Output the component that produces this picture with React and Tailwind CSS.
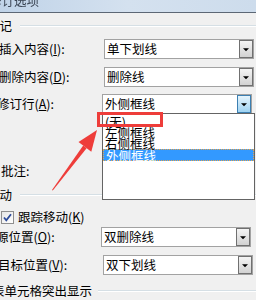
import React from "react";

function Arrow() {
  return (
    <svg className="w-[14px] h-[18px]" viewBox="0 0 14 18">
      <path d="M3.5 8 L10.5 8 L7 11.5 Z" fill="#000" />
    </svg>
  );
}

function Select({ text, focused = false, children }) {
  return (
    <div className="relative w-[150px] h-full border border-[#a2a2a2] bg-white flex items-center">
      <span className="pl-[2px] leading-none flex-1">{text}</span>
      <div
        className={
          focused
            ? "h-full w-[14px] border border-[#3c7fb1] bg-gradient-to-b from-[#e5f4fc] to-[#9fd3f2] flex items-center justify-center"
            : "h-full w-[14px] border border-[#707070] bg-gradient-to-b from-[#f4f4f4] to-[#d2d2d2] flex items-center justify-center"
        }
      >
        <Arrow />
      </div>
      {children}
    </div>
  );
}

function Header({ text, offset, lineGap, className }) {
  return (
    <div className={"flex items-center " + className}>
      <span className={"shrink-0 whitespace-nowrap " + offset}>{text}</span>
      <div className={"flex-1 h-[2px] border-t border-[#d5dfe5] border-b border-b-white " + lineGap} />
    </div>
  );
}

export default function App() {
  return (
    <div className="relative w-[256px] h-[300px] overflow-hidden bg-[#f0f0f0] font-['Noto_Sans_CJK_SC','Noto_Sans',sans-serif] text-[12.5px] text-black">
      {/* title bar */}
      <div className="h-[13px] border-b border-[#5c6775] bg-gradient-to-r from-[#c0d3e8] via-[#d4e1ef] to-[#cddcec] overflow-hidden">
        <div className="-mt-[7px] -ml-[11px] text-[12.5px] leading-[15px] text-[#3b4554] blur-[0.4px] whitespace-nowrap">修订选项</div>
      </div>

      <Header text="标记" offset="-ml-[13px]" lineGap="ml-[8px]" className="h-[26px]" />

      <div className="h-[20px] flex items-center">
        <div className="w-[105px] shrink-0 -ml-[1px] whitespace-nowrap">插入内容(<u>I</u>):</div>
        <Select text="单下划线" />
      </div>

      <div className="mt-[8px] h-[20px] flex items-center">
        <div className="w-[105px] shrink-0 -ml-[1px] whitespace-nowrap">删除内容(<u>D</u>):</div>
        <Select text="删除线" />
      </div>

      <div className="mt-[7px] h-[20px] flex items-center relative z-10">
        <div className="w-[105px] shrink-0 -ml-[3px] whitespace-nowrap">修订行(<u>A</u>):</div>
        <Select text="外侧框线" focused>
          <div className="absolute left-[-1px] top-[18px] w-[153px] h-[87px] border border-[#646464] bg-white pt-[1px] leading-[11px] text-[12.5px]">
            <div className="h-[12px] pl-[2px] flex items-center">(无)</div>
            <div className="h-[11px] pl-[2px] flex items-center">左侧框线</div>
            <div className="h-[11px] pl-[2px] flex items-center">右侧框线</div>
            <div className="h-[12px] pl-[2px] flex items-center bg-[#3399ff] text-white border border-dotted border-[#e8a54a]">外侧框线</div>
          </div>
        </Select>
      </div>

      <div className="mt-[47px] h-[20px] flex items-center">
        <div className="w-[105px] shrink-0 ml-[1px] whitespace-nowrap">批注:</div>
      </div>

      <Header text="移动" offset="-ml-[13px]" lineGap="ml-[8px]" className="mt-[3px] h-[22px]" />

      <div className="mt-[4px] h-[14px] flex items-center gap-[4px] pl-[1px]">
        <div className="w-[13px] h-[13px] border border-[#8f8f8f] bg-gradient-to-br from-[#e6e6e6] to-[#ffffff] flex items-center justify-center">
          <svg viewBox="0 0 11 11" className="w-[11px] h-[11px]">
            <path d="M2 5.5 L4.3 8.3 L9 2.2" stroke="#2d4b9a" strokeWidth="1.8" fill="none" />
          </svg>
        </div>
        <span className="whitespace-nowrap">跟踪移动(<u>K</u>)</span>
      </div>

      <div className="mt-[3px] h-[20px] flex items-center">
        <div className="w-[105px] shrink-0 -ml-[4px] whitespace-nowrap">源位置(<u>O</u>):</div>
        <Select text="双删除线" />
      </div>

      <div className="mt-[8px] h-[20px] flex items-center">
        <div className="w-[105px] shrink-0 -ml-[2px] whitespace-nowrap">目标位置(<u>V</u>):</div>
        <Select text="双下划线" />
      </div>

      <Header text="表单元格突出显示" offset="-ml-[8px]" lineGap="ml-[6px]" className="mt-[6px] h-[20px]" />

      {/* annotation overlay */}
      <div className="absolute left-[97px] top-[112px] w-[66px] h-[15px] border-[3px] border-[#ee3d3a] z-20" />
      <svg className="absolute left-0 top-0 w-[256px] h-[300px] z-20 pointer-events-none" viewBox="0 0 256 300">
        <polygon points="52,190 52.8,190.6 86.6,148.2 83.2,145.6" fill="#ee3d3a" />
        <polygon points="97,130 78.5,142.1 91.3,151.7" fill="#ee3d3a" />
      </svg>
    </div>
  );
}
